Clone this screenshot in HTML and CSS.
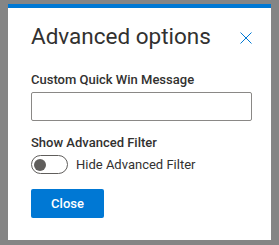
FILE: index.html
```html
<!DOCTYPE html>
<html>
<head>
<meta charset="utf-8">
<link rel="stylesheet" href="styles.css">
</head>
<body>
<div class="dialog">
  <div class="header">
    <h1 class="title">Advanced options</h1>
    <button class="close-x" aria-label="Close">
      <svg width="12" height="12" viewBox="0 0 12 12"><path d="M0.5 0.5 L11.5 11.5 M11.5 0.5 L0.5 11.5" stroke="#0078d4" stroke-width="1" fill="none"/></svg>
    </button>
  </div>
  <div class="body">
    <label class="label">Custom Quick Win Message</label>
    <input class="text-input" type="text">
    <div class="label label-toggle">Show Advanced Filter</div>
    <div class="toggle-row">
      <span class="toggle"><span class="thumb"></span></span>
      <span class="toggle-text">Hide Advanced Filter</span>
    </div>
    <button class="primary">Close</button>
  </div>
</div>
</body>
</html>
```
FILE: styles.css
```css
html, body { margin: 0; padding: 0; }
body {
  background: #858585;
  width: 279px;
  height: 245px;
  overflow: hidden;
  font-family: Roboto, "Noto Sans", sans-serif;
  color: #323130;
}
.dialog {
  margin: 4px 0 0 8px;
  width: 263px;
  height: 236px;
  box-sizing: border-box;
  background: #fff;
  border-top: 4px solid #0078d4;
  padding: 0 0 0 23px;
}
.header {
  display: flex;
  align-items: flex-start;
  justify-content: space-between;
  padding-top: 13px;
}
.title {
  margin: 0;
  font-size: 22.5px;
  font-weight: 400;
  line-height: 30px;
  color: #323130;
}
.close-x {
  border: 0;
  background: none;
  padding: 0;
  margin: 11px 19px 0 0;
  width: 12px;
  height: 12px;
  display: flex;
}
.body {
  display: flex;
  flex-direction: column;
  align-items: flex-start;
  padding-top: 20px;
}
.label {
  font-size: 13px;
  line-height: 18px;
  font-weight: 500;
}
.text-input {
  margin-top: 3px;
  width: 221px;
  height: 29px;
  box-sizing: border-box;
  border: 1px solid #8a8886;
  border-radius: 2px;
  padding: 0;
}
.label-toggle { margin-top: 13px; }
.toggle-row {
  display: flex;
  align-items: center;
  margin-top: 3px;
  gap: 8px;
}
.toggle {
  width: 37px;
  height: 19px;
  box-sizing: border-box;
  border: 1px solid #605e5c;
  border-radius: 10px;
  display: flex;
  align-items: center;
  padding-left: 2px;
}
.thumb {
  width: 12px;
  height: 12px;
  border-radius: 50%;
  background: #605e5c;
}
.toggle-text { font-size: 13px; line-height: 18px; }
.primary {
  margin-top: 15px;
  width: 73px;
  height: 29px;
  background: #0078d4;
  border: 0;
  border-radius: 2px;
  color: #fff;
  font-family: Roboto, "Noto Sans", sans-serif;
  font-size: 13px;
  font-weight: 500;
  padding: 0;
}
```
